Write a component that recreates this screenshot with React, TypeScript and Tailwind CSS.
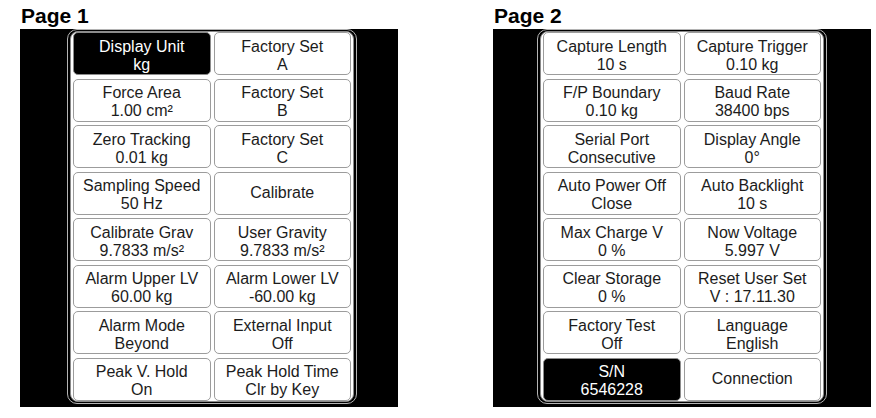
type Item = { title: string; value?: string; active?: boolean };

const page1: Item[] = [
  { title: "Display Unit", value: "kg", active: true },
  { title: "Factory Set", value: "A" },
  { title: "Force Area", value: "1.00 cm²" },
  { title: "Factory Set", value: "B" },
  { title: "Zero Tracking", value: "0.01 kg" },
  { title: "Factory Set", value: "C" },
  { title: "Sampling Speed", value: "50 Hz" },
  { title: "Calibrate" },
  { title: "Calibrate Grav", value: "9.7833 m/s²" },
  { title: "User Gravity", value: "9.7833 m/s²" },
  { title: "Alarm Upper LV", value: "60.00 kg" },
  { title: "Alarm Lower LV", value: "-60.00 kg" },
  { title: "Alarm Mode", value: "Beyond" },
  { title: "External Input", value: "Off" },
  { title: "Peak V. Hold", value: "On" },
  { title: "Peak Hold Time", value: "Clr by Key" },
];

const page2: Item[] = [
  { title: "Capture Length", value: "10 s" },
  { title: "Capture Trigger", value: "0.10 kg" },
  { title: "F/P Boundary", value: "0.10 kg" },
  { title: "Baud Rate", value: "38400 bps" },
  { title: "Serial Port", value: "Consecutive" },
  { title: "Display Angle", value: "0°" },
  { title: "Auto Power Off", value: "Close" },
  { title: "Auto Backlight", value: "10 s" },
  { title: "Max Charge V", value: "0 %" },
  { title: "Now Voltage", value: "5.997 V" },
  { title: "Clear Storage", value: "0 %" },
  { title: "Reset User Set", value: "V : 17.11.30" },
  { title: "Factory Test", value: "Off" },
  { title: "Language", value: "English" },
  { title: "S/N", value: "6546228", active: true },
  { title: "Connection" },
];

function Cell({ item }: { item: Item }) {
  const base = item.active
    ? "bg-black text-white border-[#8c8c8c]"
    : "bg-white text-[#1c1c1c] border-[#9c9c9c]";
  return (
    <div
      className={`h-[43px] rounded-[5px] border flex flex-col items-center justify-center text-[16px] leading-[18px] ${base} ${
        item.value ? "pt-[4px]" : ""
      }`}
    >
      <span>{item.title}</span>
      {item.value && <span>{item.value}</span>}
    </div>
  );
}

function Page({ label, items, inset }: { label: string; items: Item[]; inset: string }) {
  return (
    <div className="flex flex-col">
      <div className="pl-[1px] pt-[6px] h-[29px] text-[21px] leading-[20px] font-bold text-black">
        {label}
      </div>
      <div className={`w-[378px] h-[378px] bg-black ${inset}`}>
        <div className="w-[290px] rounded-[10px] border border-[#b4b4b4] bg-black p-[1px] px-[2px]">
          <div className="rounded-[8px] border border-[#8a8a8a] bg-white px-[2px] py-0">
            <div className="grid grid-cols-2 gap-x-[3px] gap-y-[3.5px]">
              {items.map((it, i) => (
                <Cell key={i} item={it} />
              ))}
            </div>
          </div>
        </div>
      </div>
    </div>
  );
}

export default function App() {
  return (
    <div
      className="w-[876px] h-[418px] bg-white flex pl-[20px] gap-[95px]"
      style={{ fontFamily: '"Liberation Sans", Arial, sans-serif' }}
    >
      <Page label="Page 1" items={page1} inset="pl-[47px]" />
      <Page label="Page 2" items={page2} inset="pl-[44px]" />
    </div>
  );
}
